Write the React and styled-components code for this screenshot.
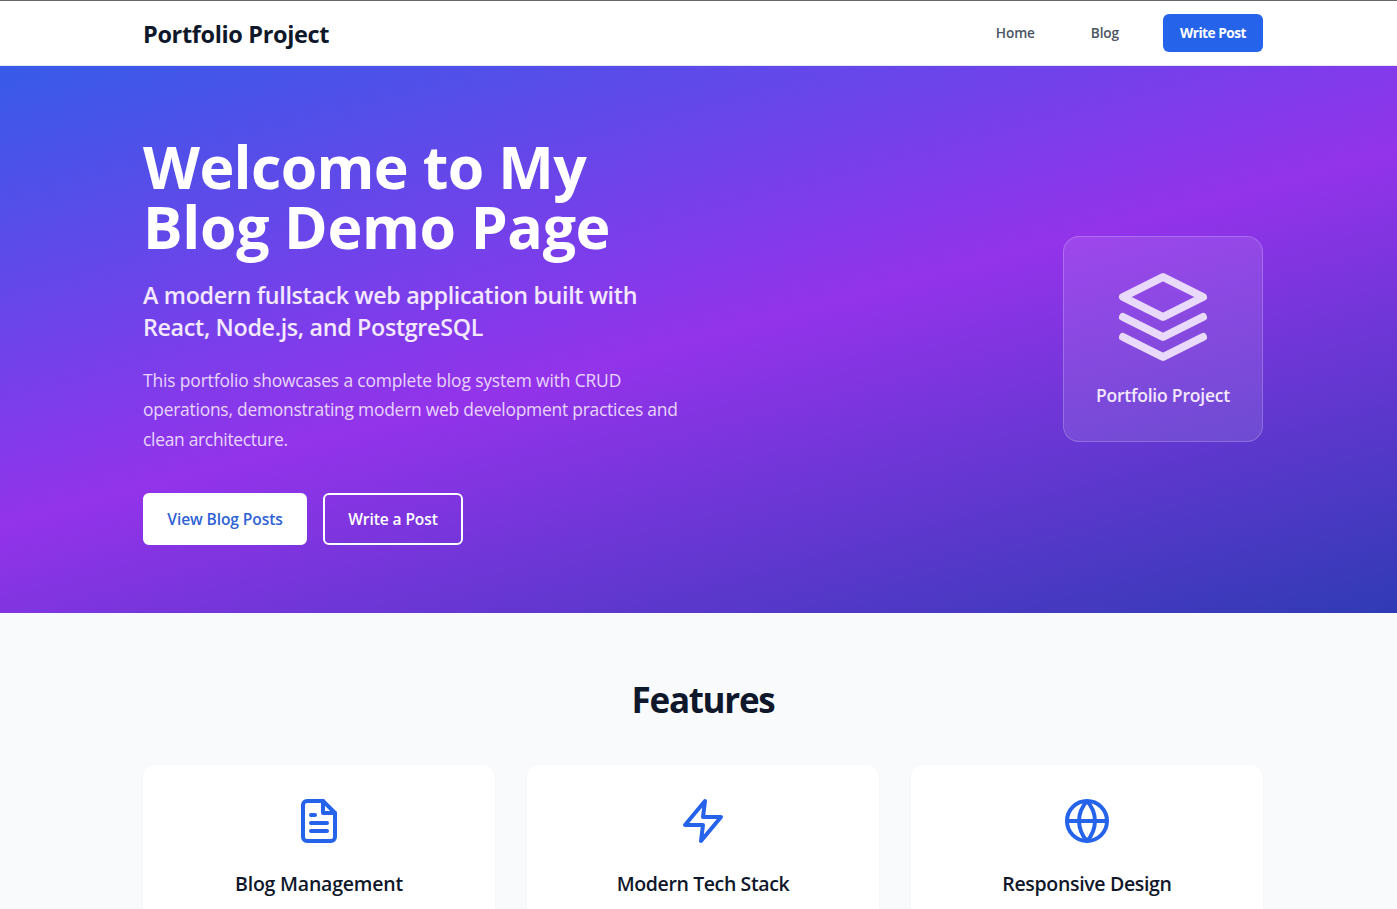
import React from "react";
import styled, { createGlobalStyle } from "styled-components";

const GlobalStyle = createGlobalStyle`
  *, *::before, *::after { box-sizing: border-box; }
  body {
    margin: 0;
    height: 909px;
    overflow: hidden;
    background: #f8fafc;
    color: #0f172a;
    font-family: "Segoe UI", "Open Sans", "Noto Sans", sans-serif;
  }
  h1, h2, h3, p { margin: 0; }
  a { color: inherit; text-decoration: none; }
`;

const Page = styled.div`
  height: 909px;
  overflow: hidden;
`;

const Header = styled.header`
  display: flex;
  align-items: center;
  justify-content: space-between;
  height: 66px;
  padding: 0 134px 0 143px;
  background: #fff;
  border-top: 1px solid #666;
  border-bottom: 1px solid #e2e8f0;
`;

const Brand = styled.a`
  font-size: 23.5px;
  font-weight: 700;
  line-height: 32px;
  letter-spacing: -0.35px;
  padding-top: 2px;
`;

const Nav = styled.nav`
  display: flex;
  align-items: center;
`;

const NavLink = styled.a`
  margin-right: ${(p) => p.$gap}px;
  color: #4b5563;
  font-size: 13.7px;
  font-weight: 600;
  line-height: 20px;
  letter-spacing: -0.15px;
`;

const NavButton = styled.a`
  display: flex;
  align-items: center;
  justify-content: center;
  width: 100px;
  height: 38px;
  padding-bottom: 1px;
  border-radius: 6px;
  background: #2563eb;
  color: #fff;
  font-size: 13.7px;
  font-weight: 700;
  letter-spacing: -0.5px;
`;

const Hero = styled.section`
  display: flex;
  align-items: center;
  justify-content: space-between;
  height: 547px;
  padding: 0 134px 0 143px;
  background: linear-gradient(165deg, #375be9 0%, #9333ea 50%, #303bb5 100%);
`;

const HeroCopy = styled.div`
  width: 576px;
  padding-top: 2px;
  white-space: nowrap;
`;

const Line = styled.span`
  display: block;
  letter-spacing: ${(p) => p.$tracking}px;
`;

const Title = styled.h1`
  color: #fff;
  font-size: 59px;
  font-weight: 700;
  line-height: 60px;
`;

const Subtitle = styled.p`
  margin-top: 23px;
  color: #f3e8ff;
  font-size: 23.3px;
  font-weight: 600;
  line-height: 32px;
  letter-spacing: -0.34px;
`;

const Description = styled.p`
  margin-top: 23px;
  color: #e9d5ff;
  font-size: 17.4px;
  line-height: 29.25px;
`;

const Actions = styled.div`
  display: flex;
  gap: 16px;
  margin-top: 39px;
`;

const ActionButton = styled.a`
  display: flex;
  align-items: center;
  justify-content: center;
  width: ${(p) => p.$width}px;
  height: 52px;
  border: 2px solid #fff;
  border-radius: 6px;
  background: ${(p) => (p.$solid ? "#fff" : "transparent")};
  color: ${(p) => (p.$solid ? "#2f62d4" : "#fff")};
  font-size: 15.6px;
  font-weight: 600;
  letter-spacing: -0.12px;
`;

const ProjectCard = styled.div`
  display: flex;
  flex-direction: column;
  align-items: center;
  gap: 16px;
  width: 200px;
  height: 206px;
  margin-bottom: 1px;
  padding-top: 32px;
  border: 1px solid rgba(255, 255, 255, 0.2);
  border-radius: 16px;
  background: rgba(255, 255, 255, 0.1);
  color: #e9d9fb;
`;

const ProjectName = styled.span`
  color: #f3e8ff;
  font-size: 17.5px;
  font-weight: 600;
  line-height: 28px;
  letter-spacing: -0.2px;
  white-space: nowrap;
`;

const Features = styled.section`
  padding: 65px 134px 0 143px;
`;

const SectionTitle = styled.h2`
  margin-bottom: 43px;
  font-size: 35px;
  font-weight: 700;
  line-height: 44px;
  letter-spacing: -1.3px;
  text-align: center;
`;

const CardGrid = styled.div`
  display: grid;
  grid-template-columns: repeat(3, 1fr);
  gap: 32px;
`;

const FeatureCard = styled.article`
  display: flex;
  flex-direction: column;
  align-items: center;
  height: 260px;
  padding-top: 32px;
  border-radius: 12px;
  background: #fff;
  box-shadow: 0 1px 3px rgba(15, 23, 42, 0.04);
  color: #2563eb;
`;

const FeatureName = styled.h3`
  margin-top: 24px;
  color: #0f172a;
  font-size: 19.5px;
  font-weight: 600;
  line-height: 30px;
  letter-spacing: ${(p) => p.$tracking}px;
`;

const IconSvg = styled.svg`
  flex-shrink: 0;
  fill: none;
  stroke: currentColor;
  stroke-width: 2;
  stroke-linecap: round;
  stroke-linejoin: round;
`;

const Icon = ({ size, children }) => (
  <IconSvg width={size} height={size} viewBox="0 0 24 24">
    {children}
  </IconSvg>
);

const features = [
  {
    name: "Blog Management",
    tracking: -0.2,
    icon: (
      <>
        <path d="M14 2H6a2 2 0 0 0-2 2v16a2 2 0 0 0 2 2h12a2 2 0 0 0 2-2V8z" />
        <path d="M14 2v6h6M16 13H8M16 17H8M10 9H8" />
      </>
    ),
  },
  {
    name: "Modern Tech Stack",
    tracking: -0.38,
    icon: <path d="M13 2 3 14h9l-1 8 10-12h-9l1-8z" />,
  },
  {
    name: "Responsive Design",
    tracking: -0.33,
    icon: (
      <>
        <circle cx="12" cy="12" r="10" />
        <path d="M2 12h20M12 2a15.3 15.3 0 0 1 4 10 15.3 15.3 0 0 1-4 10 15.3 15.3 0 0 1-4-10 15.3 15.3 0 0 1 4-10z" />
      </>
    ),
  },
];

export default function App() {
  return (
    <Page>
      <GlobalStyle />
      <Header>
        <Brand>Portfolio Project</Brand>
        <Nav>
          <NavLink $gap={56}>Home</NavLink>
          <NavLink $gap={44}>Blog</NavLink>
          <NavButton>Write Post</NavButton>
        </Nav>
      </Header>
      <Hero>
        <HeroCopy>
          <Title>
            <Line $tracking={-0.65}>Welcome to My</Line>
            <Line $tracking={-0.35}>Blog Demo Page</Line>
          </Title>
          <Subtitle>
            A modern fullstack web application built with
            <br />
            React, Node.js, and PostgreSQL
          </Subtitle>
          <Description>
            <Line $tracking={-0.13}>This portfolio showcases a complete blog system with CRUD</Line>
            <Line $tracking={-0.22}>operations, demonstrating modern web development practices and</Line>
            <Line $tracking={-0.28}>clean architecture.</Line>
          </Description>
          <Actions>
            <ActionButton $solid $width={164}>View Blog Posts</ActionButton>
            <ActionButton $width={140}>Write a Post</ActionButton>
          </Actions>
        </HeroCopy>
        <ProjectCard>
          <Icon size={96}>
            <path d="M12 2 2 7l10 5 10-5-10-5z" />
            <path d="M2 17l10 5 10-5M2 12l10 5 10-5" />
          </Icon>
          <ProjectName>Portfolio Project</ProjectName>
        </ProjectCard>
      </Hero>
      <Features>
        <SectionTitle>Features</SectionTitle>
        <CardGrid>
          {features.map((f) => (
            <FeatureCard key={f.name}>
              <Icon size={48}>{f.icon}</Icon>
              <FeatureName $tracking={f.tracking}>{f.name}</FeatureName>
            </FeatureCard>
          ))}
        </CardGrid>
      </Features>
    </Page>
  );
}
